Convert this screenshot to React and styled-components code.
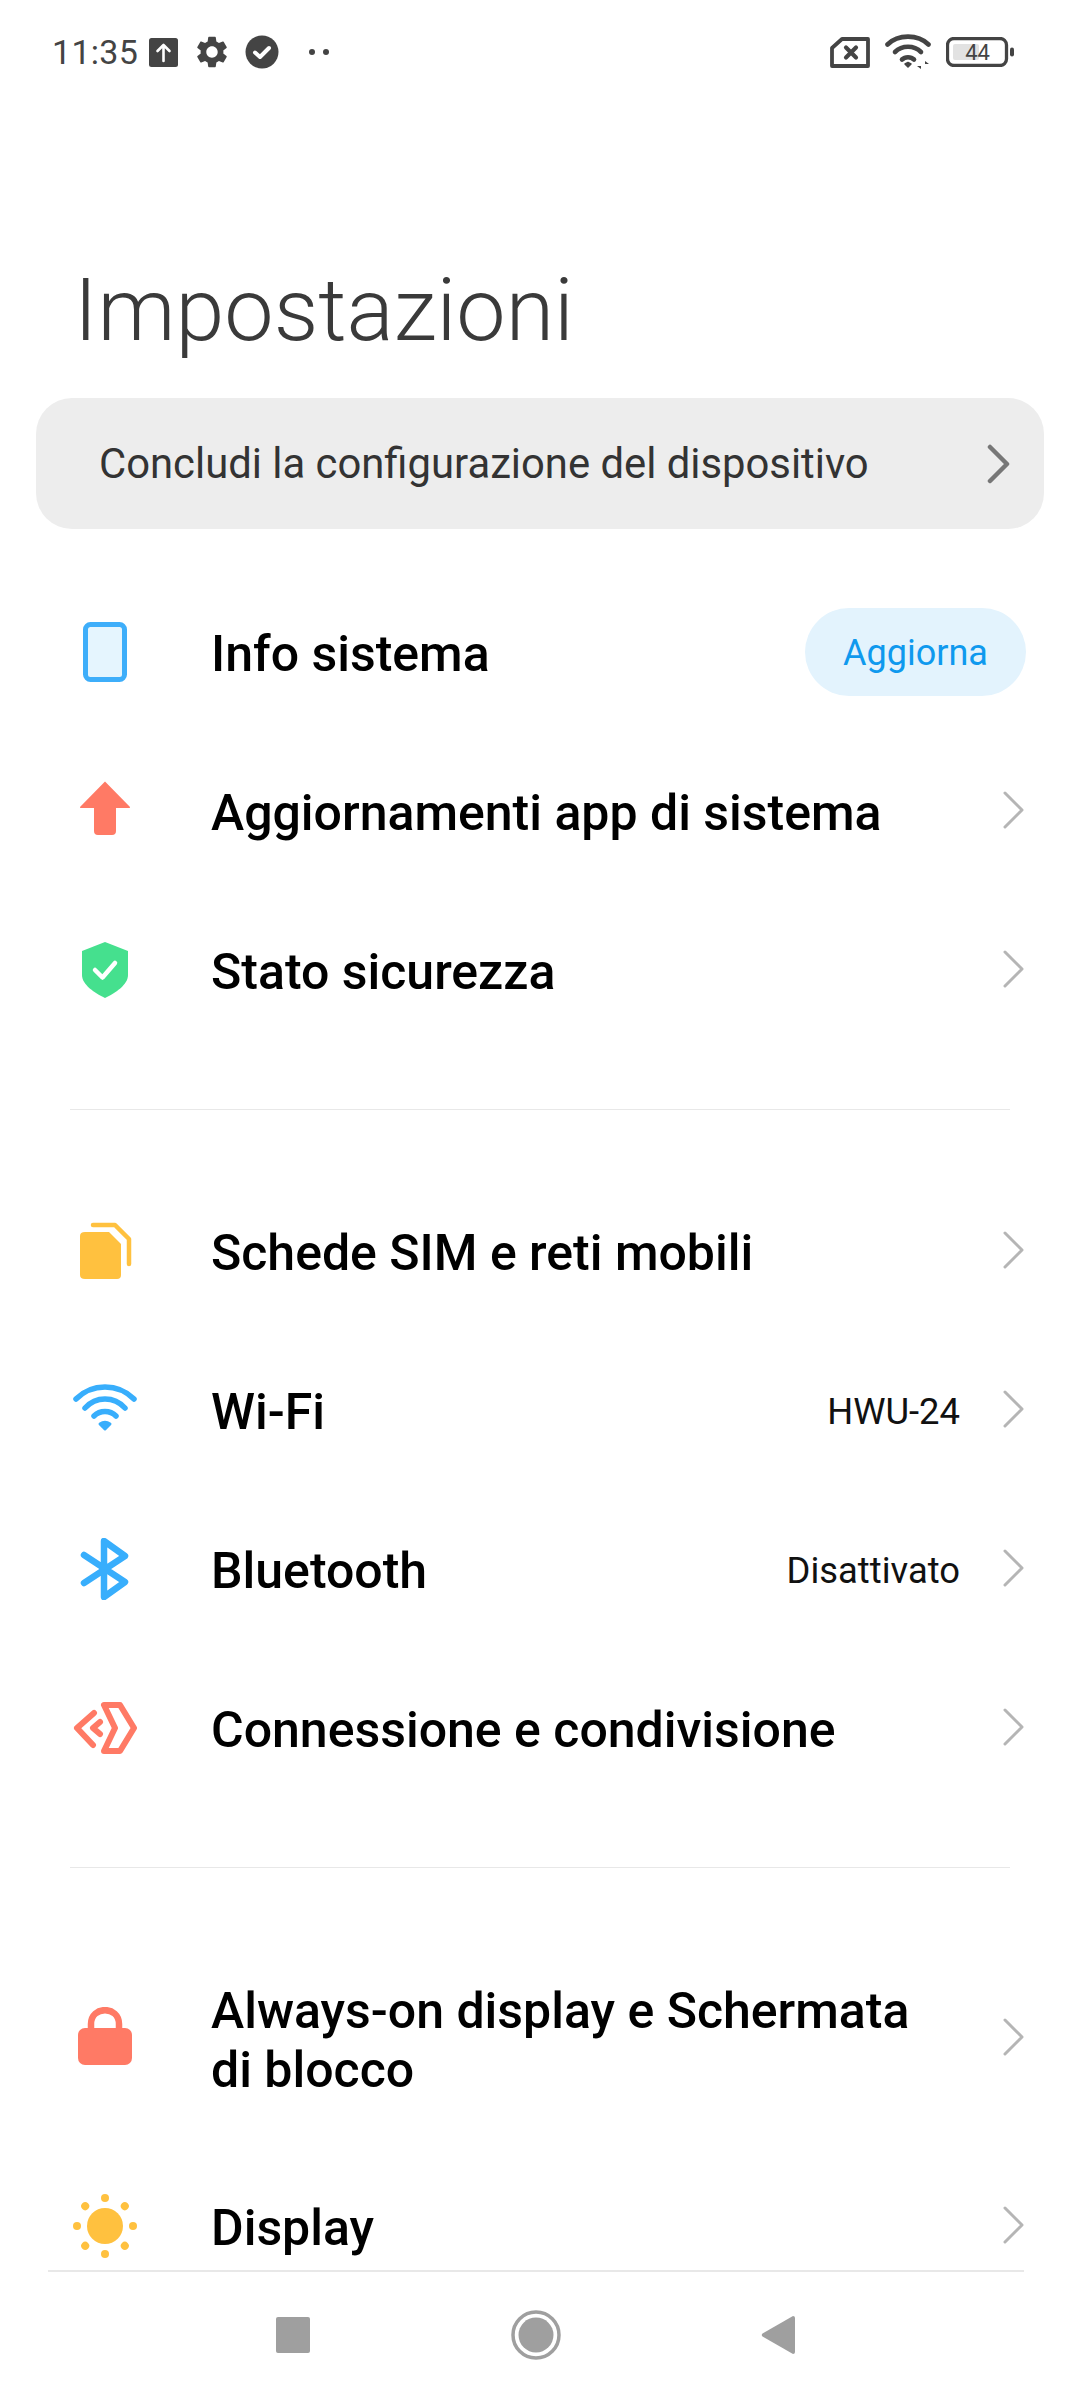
import React from "react";
import styled, { createGlobalStyle } from "styled-components";
import { MdSettings } from "react-icons/md";

const Global = createGlobalStyle`
  html, body { margin: 0; padding: 0; background: #fff; }
  body { font-family: Roboto, "Liberation Sans", sans-serif; }
`;
const Page = styled.div`
  width: 1080px; height: 2400px; background: #fff; display: flex; flex-direction: column; overflow: hidden;
`;
const StatusBar = styled.header`
  height: 104px; flex: none; display: flex; align-items: center; justify-content: space-between;
  padding: 0 65px 0 52px; box-sizing: border-box; color: #444;
`;
const StatusGroup = styled.div`display: flex; align-items: center; gap: ${p => p.$gap || 0}px;`;
const Time = styled.span`font-size: 34px; line-height: 40px; letter-spacing: 0.3px; margin-right: 11px;`;
const Gear = styled(MdSettings)`margin: 0 14px 0 15px;`;
const StatusSpacer = styled.span`width: 30px;`;
const Scroll = styled.main`flex: 1; overflow: hidden; min-height: 0;`;
const Title = styled.h1`
  margin: 0; padding: 156px 0 0 74px; font-size: 88px; line-height: 100px; font-weight: 300; color: #3a3a3a;
`;
const SetupCard = styled.div`
  margin: 38px 36px 0; height: 131px; background: #ededed; border-radius: 36px; display: flex; align-items: center;
  justify-content: space-between; padding: 0 33px 0 63px; font-size: 41.8px; color: #333;
`;
const Section = styled.section`padding: ${p => p.$top}px 0 0;`;
const Divider = styled.hr`margin: 58px 70px 0; border: 0; height: 1px; background: #e8e8e8;`;
const Row = styled.div`
  height: ${p => p.$h || 159}px; display: flex; align-items: center; padding: 0 54px 0 45px;
`;
const IconSlot = styled.div`
  width: 120px; flex: none; display: flex; justify-content: center; margin-right: 46px;
  padding-bottom: ${p => p.$lift || 4}px;
`;
const Label = styled.div`
  flex: 1; font-size: 50px; line-height: 59px; font-weight: 500; color: #000; padding: 2px 40px 0 0;
`;
const Value = styled.span`font-size: 36.4px; color: #111; margin-right: 42px; white-space: nowrap;`;
const Badge = styled.span`
  height: 88px; width: 221px; border-radius: 44px; background: #e3f3fd; color: #0f99ee; font-size: 36px;
  display: flex; align-items: center; justify-content: center; padding-top: 2px; box-sizing: border-box;
  margin: 0 0 4px 0;
`;
const ChevronMark = styled.svg`margin-bottom: ${p => (p.$dark ? 0 : 6)}px;`;
const NavBar = styled.nav`
  height: 130px; flex: none; margin: 0 56px 0 48px; border-top: 2px solid #e8e8e8; box-sizing: border-box;
  display: flex; align-items: center; justify-content: space-between; padding: 0 229px 2px 228px;
`;

const Chevron = ({ dark }) => (
  <ChevronMark $dark={dark} width="24" height="40" viewBox="0 0 24 40" fill="none" stroke={dark ? "#777" : "#b5b5b5"} strokeWidth={dark ? 4.5 : 3} strokeLinecap="round" strokeLinejoin="round">
    <path d="M3 3 L20 20 L3 37" />
  </ChevronMark>
);
const UploadIcon = () => (
  <svg width="29" height="29" viewBox="0 0 29 29"><rect width="29" height="29" rx="2.5" fill="#444" /><path d="M14.5 23V7M8.500 13l6-6 6 6" stroke="#fff" strokeWidth="2.6" fill="none" strokeLinecap="round" strokeLinejoin="round" /></svg>
);
const CheckCircle = () => (
  <svg width="34" height="34" viewBox="0 0 34 34"><circle cx="17" cy="17" r="16.500" fill="#444" /><path d="M10 17.500l5 4.500 9-9" stroke="#fff" strokeWidth="4" fill="none" strokeLinecap="round" strokeLinejoin="round" /></svg>
);
const Dots = () => (
  <svg width="20" height="6" viewBox="0 0 20 6"><circle cx="3" cy="3" r="3" fill="#444" /><circle cx="17" cy="3" r="3" fill="#444" /></svg>
);
const SimOff = () => (
  <svg width="40" height="31" viewBox="0 0 40 31" fill="none" stroke="#444" strokeWidth="3.800" strokeLinejoin="round" strokeLinecap="round">
    <path d="M12 2H38V29H2V11Z" /><path d="M16 10.500l10 10M26 10.500l-10 10" strokeWidth="4.200" />
  </svg>
);
const WifiStatus = () => (
  <svg width="46" height="36" viewBox="0 0 46 36" fill="none" stroke="#444" strokeLinecap="round">
    <path d="M2.500 10.500C13 0 33 0 43.500 10.500" strokeWidth="4.600" />
    <path d="M10 18C17 11 29 11 36 18" strokeWidth="4.600" />
    <path d="M17 25.500C20 22.500 26 22.500 29 25.500" strokeWidth="4.600" />
    <path d="M20 30l3-1.500 3 1.500-3 3z" fill="#444" strokeWidth="1.500" strokeLinejoin="round" />
    <path d="M36 27v8l-4-3h4zM40 35v-8l4 3h-4z" fill="#444" stroke="none" />
  </svg>
);
const Battery = () => (
  <svg width="69" height="30" viewBox="0 0 69 30">
    <rect x="1.500" y="1.500" width="59" height="27" rx="6.500" fill="none" stroke="#444" strokeWidth="3.300" />
    <rect x="7" y="7" width="26" height="16" rx="2" fill="#e2e2e2" />
    <rect x="64" y="10.500" width="4" height="9" rx="2" fill="#444" />
    <text x="31.500" y="22.500" textAnchor="middle" fontFamily="Roboto" fontSize="22" fill="#444">44</text>
  </svg>
);

const Phone = () => (
  <svg width="44" height="60" viewBox="0 0 44 60"><rect x="2.500" y="2.500" width="39" height="55" rx="5" fill="#e5f5fe" stroke="#3eaefa" strokeWidth="5" /></svg>
);
const ArrowUp = () => (
  <svg width="52" height="56" viewBox="0 0 52 56"><path d="M26 1.500 L51 27 Q51.500 28 50 28 H37 V51 Q37 55 33 55 H19 Q15 55 15 51 V28 H2 Q.500 28 1 27 Z" fill="#ff7a65" /></svg>
);
const Shield = () => (
  <svg width="50" height="58" viewBox="0 0 50 58"><path d="M25 1 L48 10 V34 C48 44 35 52 25 57 C15 52 2 44 2 34 V10 Z" fill="#45e08e" /><path d="M15 29l7.500 7.500L35 22" stroke="#fff" strokeWidth="4.500" fill="none" strokeLinecap="round" strokeLinejoin="round" /></svg>
);
const Sim = () => (
  <svg width="54" height="58" viewBox="0 0 54 58" fill="none">
    <path d="M7 10H31L43 22V53Q43 57 39 57H7Q2 57 2 53V14Q2 10 7 10Z" fill="#ffc13f" />
    <path d="M15 3H37L51 17V42" stroke="#ffc13f" strokeWidth="4.500" strokeLinecap="round" strokeLinejoin="round" />
  </svg>
);
const WifiColor = () => (
  <svg width="64" height="48" viewBox="0 0 64 48" fill="none" stroke="#38aefc" strokeWidth="5.500" strokeLinecap="round">
    <path d="M3 15C19 -1 45 -1 61 15" />
    <path d="M12 24C23 12 41 12 52 24" />
    <path d="M21 32C27 26 37 26 43 32" />
    <path d="M27 40C30 38 34 38 37 40L32 45Z" fill="#38aefc" strokeWidth="3" strokeLinejoin="round" />
  </svg>
);
const BluetoothIcon = () => (
  <svg width="50" height="62" viewBox="0 0 50 62" fill="none" stroke="#38aefc" strokeWidth="6.500" strokeLinecap="round" strokeLinejoin="round">
    <path d="M4 17L45 44L24 59V3L45 18L4 45" />
  </svg>
);
const Share = () => (
  <svg width="64" height="52" viewBox="0 0 64 52" fill="none" stroke="#ff7a65" strokeWidth="6" strokeLinecap="round" strokeLinejoin="round">
    <path d="M21 11L4 26L20 43" />
    <path d="M27 20L20 26L27 32" />
    <path d="M31 3H47L61 26L47 49H31L42 26Z" />
  </svg>
);
const Lock = () => (
  <svg width="54" height="58" viewBox="0 0 54 58"><path d="M13 24V17C13 -1.500 41 -1.500 41 17V24" fill="none" stroke="#ff7a65" strokeWidth="6.500" /><rect y="21" width="54" height="37" rx="7" fill="#ff7a65" /></svg>
);
const Sun = () => {
  const rays = Array.from({ length: 8 }, (_, i) => i * 45);
  return (
    <svg width="64" height="64" viewBox="0 0 64 64">
      <circle cx="32" cy="32" r="18" fill="#ffc13f" />
      {rays.map(a => <circle key={a} cx="32" cy="4" r="4" fill="#ffc13f" transform={`rotate(${a} 32 32)`} />)}
    </svg>
  );
};
const Square = () => <svg width="34" height="36" viewBox="0 0 34 36"><rect width="34" height="36" rx="2" fill="#9f9f9f" /></svg>;
const Home = () => (
  <svg width="50" height="50" viewBox="0 0 50 50"><circle cx="25" cy="25" r="23" fill="none" stroke="#9f9f9f" strokeWidth="3.500" /><circle cx="25" cy="25" r="17.500" fill="#9f9f9f" /></svg>
);
const Back = () => (
  <svg width="34" height="40" viewBox="0 0 34 40"><path d="M32 1 Q34 1 34 3 V37 Q34 39 32 39 L1.500 21.500 Q0 20 1.500 18.500 Z" fill="#9f9f9f" /></svg>
);

const SettingRow = ({ icon, label, value, badge, h, lift }) => (
  <Row $h={h}>
    <IconSlot $lift={lift}>{icon}</IconSlot>
    <Label>{label}</Label>
    {value && <Value>{value}</Value>}
    {badge ? <Badge>{badge}</Badge> : <Chevron />}
  </Row>
);

export default function App() {
  return (
    <Page>
      <Global />
      <StatusBar>
        <StatusGroup>
          <Time>11:35</Time>
          <UploadIcon />
          <Gear size={38} color="#444" />
          <CheckCircle />
          <StatusSpacer />
          <Dots />
        </StatusGroup>
        <StatusGroup $gap={15}>
          <SimOff />
          <WifiStatus />
          <Battery />
        </StatusGroup>
      </StatusBar>
      <Scroll>
        <Title>Impostazioni</Title>
        <SetupCard>
          <span>Concludi la configurazione del dispositivo</span>
          <Chevron dark />
        </SetupCard>
        <Section $top={45}>
          <SettingRow icon={<Phone />} label="Info sistema" badge="Aggiorna" />
          <SettingRow icon={<ArrowUp />} lift={9} label="Aggiornamenti app di sistema" />
          <SettingRow icon={<Shield />} label="Stato sicurezza" />
        </Section>
        <Divider />
        <Section $top={63}>
          <SettingRow icon={<Sim />} label="Schede SIM e reti mobili" />
          <SettingRow icon={<WifiColor />} lift={7} label="Wi-Fi" value="HWU-24" />
          <SettingRow icon={<BluetoothIcon />} label="Bluetooth" value="Disattivato" />
          <SettingRow icon={<Share />} label="Connessione e condivisione" />
        </Section>
        <Divider />
        <Section $top={64}>
          <SettingRow icon={<Lock />} lift={8} h={216} label="Always-on display e Schermata di blocco" />
          <SettingRow icon={<Sun />} label="Display" />
        </Section>
      </Scroll>
      <NavBar>
        <Square />
        <Home />
        <Back />
      </NavBar>
    </Page>
  );
}
